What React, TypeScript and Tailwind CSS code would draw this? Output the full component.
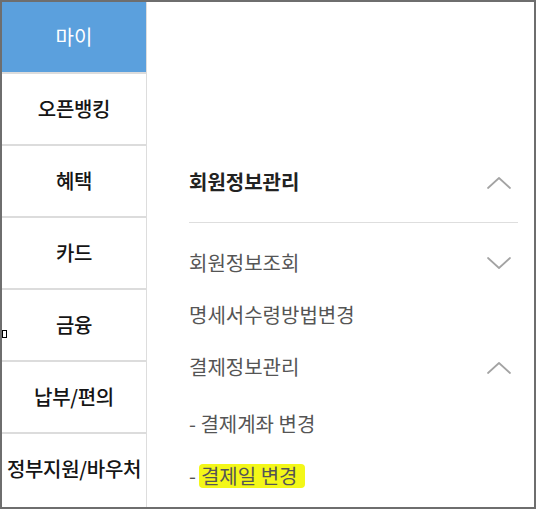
import { Fragment } from "react";

const menu = ["마이", "오픈뱅킹", "혜택", "카드", "금융", "납부/편의", "정부지원/바우처"];

function Chevron({ up }: { up?: boolean }) {
  return (
    <svg width="26" height="15" viewBox="0 0 26 15" fill="none" className="shrink-0">
      <path
        d={up ? "M2 13 L13 3 L24 13" : "M2 2 L13 12 L24 2"}
        stroke="#a3a3a3"
        strokeWidth="1.7"
        strokeLinecap="round"
        strokeLinejoin="round"
      />
    </svg>
  );
}

export default function App() {
  return (
    <div
      className="relative w-[536px] h-[509px] border-2 border-[#6e6e6e] bg-white flex overflow-hidden"
      style={{ fontFamily: '"Noto Sans CJK KR", "Noto Sans", sans-serif' }}
    >
      {/* left category list */}
      <div className="w-[145px] shrink-0 flex flex-col border-r border-[#dddddd]">
        {menu.map((m, i) => (
          <Fragment key={m}>
            <div
              className={
                i === 0
                  ? "h-[70px] flex items-center justify-center bg-[#5ba0dd] text-white text-[20px]"
                  : "h-[70px] flex items-center justify-center text-[#151515] text-[20px] font-medium tracking-[-0.3px]"
              }
            >
              {m}
            </div>
            {i < menu.length - 1 && <div className="h-[2px] bg-[#dcdcdc]" />}
          </Fragment>
        ))}
      </div>

      {/* right sub menu */}
      <div className="flex-1 pl-[42px] pr-[16px] pt-[154px]">
        <div className="h-[52px] flex items-center justify-between pr-[6px]">
          <span className="text-[20px] font-bold text-[#222222]">회원정보관리</span>
          <Chevron up />
        </div>
        <div className="mt-[14px] h-px bg-[#dedede]" />
        <div className="pt-[14px] text-[20px] text-[#555555]">
          <div className="h-[52px] flex items-center justify-between pr-[6px]">
            <span>회원정보조회</span>
            <Chevron />
          </div>
          <div className="h-[52px] flex items-center">명세서수령방법변경</div>
          <div className="h-[52px] flex items-center justify-between pr-[6px]">
            <span>결제정보관리</span>
            <Chevron up />
          </div>
          <div className="h-[57px] flex items-center pt-[5px]">- 결제계좌 변경</div>
          <div className="h-[51px] flex items-center">
            <span className="mr-[3px]">-</span>
            <span className="bg-[#f3f718] rounded-[4px] pl-[2px] pr-[8px] leading-[24px]">결제일 변경</span>
          </div>
        </div>
      </div>

      {/* stray marker at left edge */}
      <div className="absolute left-0 top-[328px] w-[5px] h-[8px] border border-black bg-white" />
    </div>
  );
}
